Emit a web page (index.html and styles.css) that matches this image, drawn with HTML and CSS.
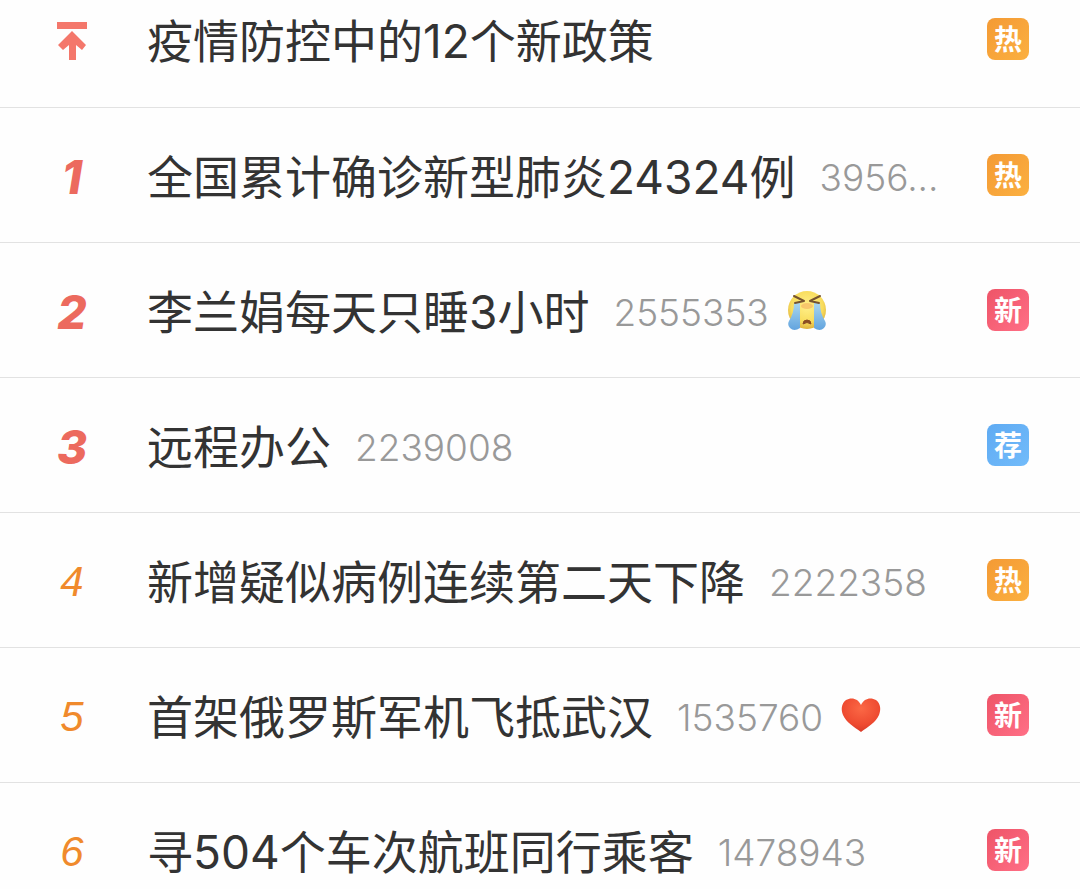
FILE: index.html
```html
<!DOCTYPE html>
<html lang="zh-CN">
<head>
<meta charset="utf-8">
<meta name="viewport" content="width=device-width, initial-scale=1">
<title>热搜榜</title>
<link rel="stylesheet" href="styles.css">
</head>
<body>
<ol class="hot-list">
  <li class="row">
    <span class="rank pinned">
      <svg class="pin" viewBox="0 0 32 42" role="img" aria-label="置顶"><path d="M1 4h30v7H1z"/><path d="M16 13L30 27l-4 5-6-5v15h-7V27l-6 5-5-5z"/></svg>
    </span>
    <span class="topic"><span class="title">疫情防控中的12个新政策</span></span>
    <span class="badge hot">热</span>
  </li>
  <li class="row">
    <span class="rank top">1</span>
    <span class="topic"><span class="title">全国累计确诊新型肺炎24324例</span><span class="count">3956...</span></span>
    <span class="badge hot">热</span>
  </li>
  <li class="row">
    <span class="rank top">2</span>
    <span class="topic"><span class="title">李兰娟每天只睡3小时</span><span class="count">2555353</span>
      <svg class="emoji" viewBox="0 0 40 42" role="img" aria-label="大哭">
        <defs>
          <radialGradient id="face" cx=".5" cy=".4" r=".6"><stop offset="0" stop-color="#fff08a"/><stop offset=".7" stop-color="#f8dc5c"/><stop offset="1" stop-color="#dfb13c"/></radialGradient>
          <linearGradient id="tear" x2="0" y2="1"><stop offset="0" stop-color="#a9d6ee"/><stop offset="1" stop-color="#62a4df"/></linearGradient>
        </defs>
        <circle cx="20" cy="21" r="19" fill="url(#face)"/>
        <ellipse cx="20" cy="17" rx="6" ry="3" fill="#f5b260" opacity=".65"/>
        <path d="M7 14h6v25q-6 4-10 0-3-3-1-7 5-8 5-18z" fill="url(#tear)"/>
        <path d="M33 14h-6v25q6 4 10 0 3-3 1-7-5-8-5-18z" fill="url(#tear)"/>
        <path d="M7 7l10 5-9 2M33 7l-10 5 9 2" fill="none" stroke="#75532f" stroke-width="2" stroke-linecap="round" stroke-linejoin="round"/>
        <path d="M16 35q0-4 4-4t4 4q-4-3-8 0z" fill="#8b4c23" stroke="#8b4c23"/>
      </svg>
    </span>
    <span class="badge new">新</span>
  </li>
  <li class="row">
    <span class="rank top">3</span>
    <span class="topic"><span class="title">远程办公</span><span class="count">2239008</span></span>
    <span class="badge rec">荐</span>
  </li>
  <li class="row">
    <span class="rank">4</span>
    <span class="topic"><span class="title">新增疑似病例连续第二天下降</span><span class="count">2222358</span></span>
    <span class="badge hot">热</span>
  </li>
  <li class="row">
    <span class="rank">5</span>
    <span class="topic"><span class="title">首架俄罗斯军机飞抵武汉</span><span class="count">1535760</span>
      <svg class="emoji" viewBox="0 0 40 42" role="img" aria-label="红心">
        <defs><radialGradient id="heart" cx=".5" cy=".3" r=".7"><stop offset="0" stop-color="#fb6845"/><stop offset=".7" stop-color="#ee4a30"/><stop offset="1" stop-color="#d83a28"/></radialGradient></defs>
        <path d="M20 11C17 4 10 3 5 6 0 10 0 16 2 21c3 7 11 12 18 17 7-5 15-10 18-17 2-5 2-11-3-15-5-3-12-2-15 5z" fill="url(#heart)"/>
      </svg>
    </span>
    <span class="badge new">新</span>
  </li>
  <li class="row">
    <span class="rank">6</span>
    <span class="topic"><span class="title">寻504个车次航班同行乘客</span><span class="count">1478943</span></span>
    <span class="badge new">新</span>
  </li>
</ol>
</body>
</html>
```
FILE: styles.css
```css
body {
  margin: 0;
  background: #fefefe;
  color: #333;
  font-family: Inter, "Noto Sans CJK SC", sans-serif;
}

.hot-list {
  margin: 0;
  padding: 0;
  list-style: none;
}

.row {
  display: flex;
  align-items: center;
  padding: 46px 51px 46px 36px;
  border-bottom: 1px solid #e2e2e2;
}

.row:first-child {
  padding-top: 18px;
  padding-bottom: 47px;
}

.row:last-child {
  padding-bottom: 16px;
  border-bottom: 0;
}

.rank {
  display: flex;
  flex: none;
  justify-content: center;
  width: 72px;
  margin-right: 39px;
  padding-top: 4px;
  color: #f08a2c;
  font-family: "Liberation Sans", Arial, sans-serif;
  font-size: 42px;
  font-style: italic;
  line-height: 38px;
}

.rank.top {
  color: #ec6a5e;
  font-family: Inter, sans-serif;
  font-size: 46px;
  font-weight: 800;
}

.rank.pinned {
  padding-top: 0;
}

.pin {
  width: 32px;
  height: 42px;
  fill: #f4776b;
}

.topic {
  display: flex;
  flex: 1;
  align-items: center;
  min-width: 0;
  white-space: nowrap;
}

.title {
  padding-top: 4px;
  font-size: 46px;
  line-height: 38px;
}

.count {
  margin-left: 24px;
  padding-top: 6px;
  color: #999;
  font-size: 37px;
  font-weight: 300;
  line-height: 36px;
}

.emoji {
  width: 40px;
  height: 42px;
  margin-left: 18px;
}

.badge {
  flex: none;
  width: 42px;
  padding-top: 2px;
  border-radius: 8px;
  color: #fff;
  font-size: 28px;
  font-weight: 700;
  line-height: 40px;
  text-align: center;
}

.hot {
  background: linear-gradient(135deg, #f49a35, #fbb040);
}

.new {
  background: linear-gradient(135deg, #ee5468, #ff6f86);
}

.rec {
  background: linear-gradient(135deg, #5fabf3, #72bbfa);
}
```
